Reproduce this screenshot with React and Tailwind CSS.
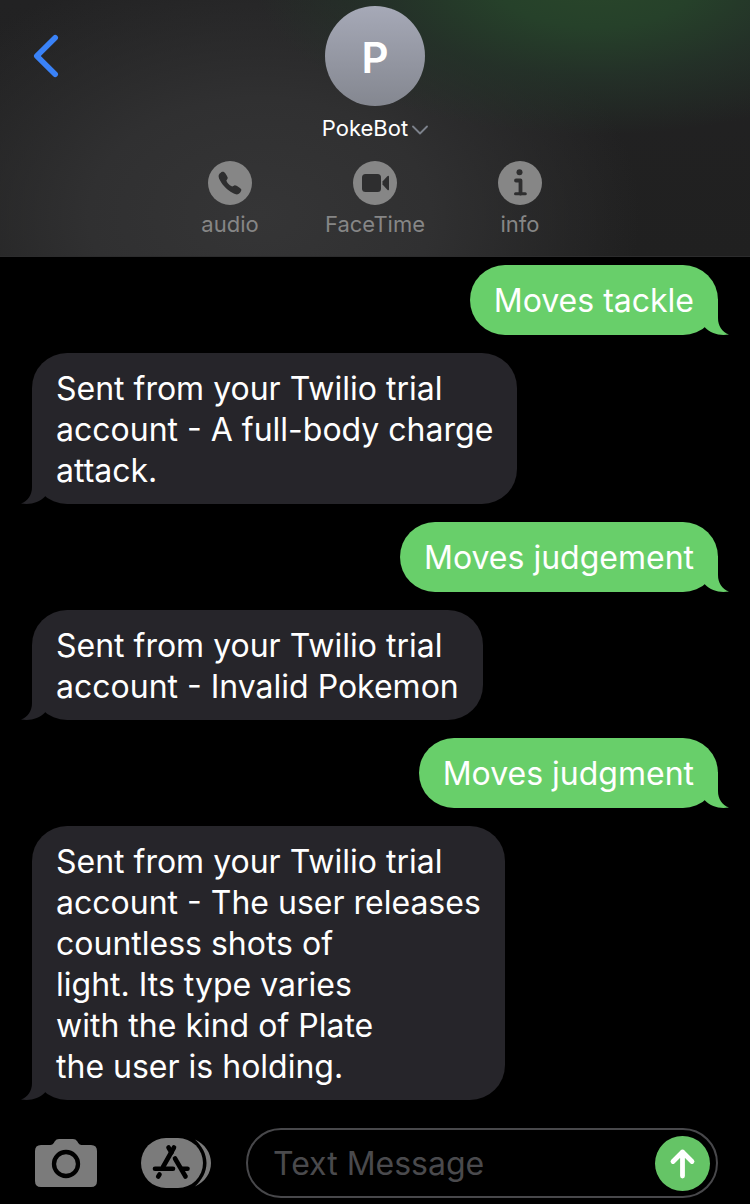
import React from "react";
import { IoCall } from "react-icons/io5";

const messages = [
  { from: "me", text: "Moves tackle" },
  { from: "bot", text: "Sent from your Twilio trial\naccount - A full-body charge\nattack." },
  { from: "me", text: "Moves judgement" },
  { from: "bot", text: "Sent from your Twilio trial\naccount - Invalid Pokemon" },
  { from: "me", text: "Moves judgment" },
  {
    from: "bot",
    text: "Sent from your Twilio trial\naccount - The user releases\ncountless shots of\nlight. Its type varies\nwith the kind of Plate\nthe user is holding.",
  },
];

function Tail({ mine }) {
  return (
    <svg
      viewBox="0 0 24 36"
      aria-hidden="true"
      className={
        mine
          ? "absolute bottom-0 -right-[11px] h-9 w-6 fill-current"
          : "absolute bottom-0 -left-[11px] h-9 w-6 -scale-x-100 fill-current"
      }
    >
      <path d="M0 0H13V19C13 27 17 33 24 35.5C14 37 6 34.5 0 28.500Z" />
    </svg>
  );
}

function Bubble({ from, text }) {
  const mine = from === "me";
  return (
    <li
      className={
        mine
          ? "relative min-h-[70px] self-end rounded-[35px] bg-[#68cf6a] px-6 pt-[15px] pb-[13px] text-[#68cf6a]"
          : "relative min-h-[70px] self-start rounded-[35px] bg-[#26252a] px-6 pt-[15px] pb-[13px] text-[#26252a]"
      }
    >
      <Tail mine={mine} />
      <p className="relative whitespace-pre-line text-[32px] leading-[41px] text-white">{text}</p>
    </li>
  );
}

function Action({ label, children }) {
  return (
    <button type="button" className="flex w-[145px] flex-col items-center gap-1 text-[#868686]">
      <span className="flex size-11 items-center justify-center rounded-full bg-[#868686] text-[#2e2e2f]">
        {children}
      </span>
      <span className="text-[22px] leading-[30px]">{label}</span>
    </button>
  );
}

export default function App() {
  return (
    <div className="flex min-h-screen flex-col bg-black font-['Inter','Liberation_Sans',sans-serif]">
      <header className="relative flex flex-col items-center border-b border-[#2c2c2d] bg-[radial-gradient(ellipse_340px_155px_at_595px_-20px,#29462a_0%,#26412a_30%,#243429cc_62%,transparent_100%),radial-gradient(ellipse_380px_260px_at_260px_215px,#353536_0%,#303031_45%,transparent_100%),linear-gradient(#222223,#202020)] pt-[6px] pb-[17px]">
        <button type="button" aria-label="Back" className="absolute top-8 left-7 text-[#3a82f7]">
          <svg viewBox="0 0 36 48" className="h-12 w-9" fill="none" stroke="currentColor" strokeWidth="5.600" strokeLinecap="round" strokeLinejoin="round">
            <path d="M27.200 5.800 8.800 24 27.200 42.200" />
          </svg>
        </button>
        <div className="flex size-[100px] items-center justify-center rounded-full bg-linear-to-b from-[#a6a9b7] to-[#848790] pt-[3px] text-[42px] font-semibold text-white">
          P
        </div>
        <button type="button" className="mt-2 flex items-center gap-1 text-[22px] leading-7 text-white">
          PokeBot
          <svg viewBox="0 0 16 10" className="mt-1 h-[10px] w-4" fill="none" stroke="#7d828c" strokeWidth="1.800" strokeLinecap="round" strokeLinejoin="round">
            <path d="M1 1.500 8 8.500 15 1.500" />
          </svg>
        </button>
        <nav className="mt-[19px] flex justify-center">
          <Action label="audio">
            <IoCall className="size-[26px]" />
          </Action>
          <Action label="FaceTime">
            <svg viewBox="0 0 44 44" className="size-11" fill="currentColor">
              <rect x="9" y="13" width="19" height="18" rx="3.500" />
              <path d="M29.500 20.500 34.300 15.300Q36 14 36 16V28Q36 30 34.300 28.700L29.500 23.500Z" />
            </svg>
          </Action>
          <Action label="info">
            <svg viewBox="0 0 44 44" className="size-11" fill="none" stroke="currentColor" strokeWidth="3" strokeLinecap="round" strokeLinejoin="round">
              <circle cx="21.500" cy="11.300" r="3" fill="currentColor" stroke="none" />
              <path d="M18 19.500H22.500V32.500" strokeWidth="3.800" />
              <path d="M17.500 32.700H27.300" />
            </svg>
          </Action>
        </nav>
      </header>

      <main className="flex-1 px-8 pt-2">
        <ul className="flex flex-col gap-[18px]">
          {messages.map((m, i) => (
            <Bubble key={i} from={m.from} text={m.text} />
          ))}
        </ul>
      </main>

      <form className="mt-7 flex items-center pr-8 pb-[6px] pl-[35px]" onSubmit={(e) => e.preventDefault()}>
        <button type="button" aria-label="Camera">
          <svg viewBox="0 0 62 48" className="h-12 w-[62px]">
            <path
              fill="#7b7b7b"
              d="M6 6H15.500Q17.500 6 18.800 4L19.800 2.300Q21.200 0 24 0H38Q40.800 0 42.200 2.300L43.200 4Q44.500 6 46.500 6H56Q62 6 62 12V42Q62 48 56 48H6Q0 48 0 42V12Q0 6 6 6Z"
            />
            <circle cx="31" cy="25" r="12" fill="none" stroke="#000" strokeWidth="4.300" />
          </svg>
        </button>
        <button type="button" aria-label="Apps" className="ml-11">
          <svg viewBox="0 0 70 50" className="h-[50px] w-[70px]">
            <path fill="#7b7b7b" d="M54 1.500C64 6 70 15 70 25S64 44 54 48.500C61 42 65.500 34 65.500 25S61 8 54 1.500Z" />
            <rect width="62" height="50" rx="25" fill="#7b7b7b" />
            <g fill="none" stroke="#000" strokeWidth="4.600" strokeLinecap="round">
              <path d="M27.500 9.500 30.500 14.500" />
              <path d="M33 9.500 22 29" />
              <path d="M14 30.700H32" />
              <path d="M41.500 30.700H46.500" />
              <path d="M34 20.500 44.500 38.500" />
              <path d="M18.500 36.500 17.200 38.500" />
            </g>
          </svg>
        </button>
        <div className="ml-[35px] flex h-[70px] min-w-0 flex-1 items-center rounded-full border-2 border-[#48484b] pr-[6px] pl-[25px]">
          <input
            type="text"
            aria-label="Text Message"
            placeholder="Text Message"
            className="min-w-0 flex-1 bg-transparent text-[32px] leading-[41px] text-white outline-none placeholder:text-[#4a4a4d]"
          />
          <button type="submit" aria-label="Send" className="flex size-[55px] shrink-0 items-center justify-center rounded-full bg-[#65c466]">
            <svg viewBox="0 0 55 55" className="size-[55px]" fill="none" stroke="#fff" strokeWidth="4.800" strokeLinecap="round" strokeLinejoin="round">
              <path d="M27.500 40V16M18 25.500 27.500 16 37 25.500" />
            </svg>
          </button>
        </div>
      </form>
    </div>
  );
}
